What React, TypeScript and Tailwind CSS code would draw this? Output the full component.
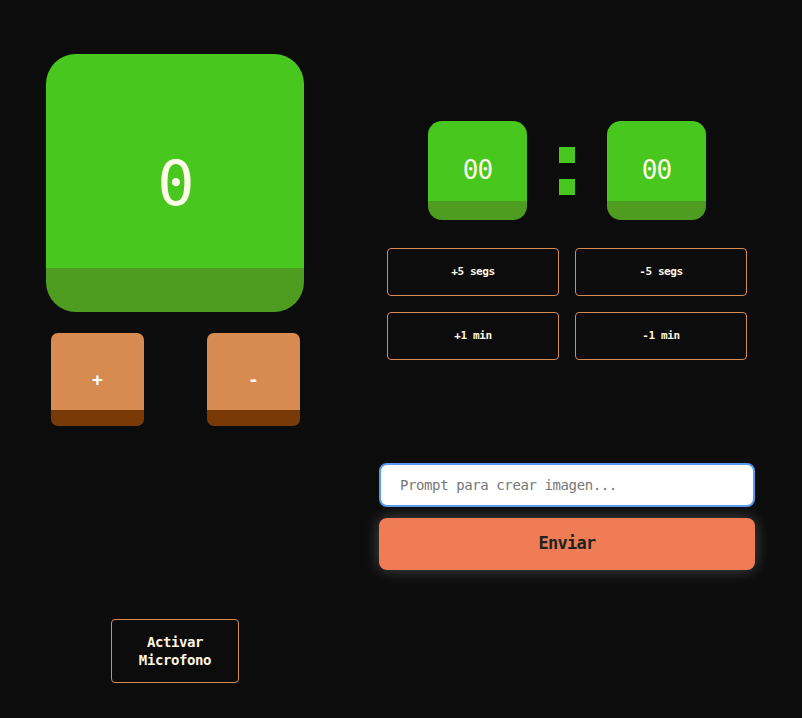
import { useState } from 'react';

const mono = { fontFamily: '"DejaVu Sans Mono", "Liberation Mono", monospace' };

export default function App() {
  const [count, setCount] = useState(0);
  const [secs, setSecs] = useState(0);
  const [prompt, setPrompt] = useState('');

  const mm = String(Math.floor(secs / 60)).padStart(2, '0');
  const ss = String(secs % 60).padStart(2, '0');
  const addSecs = (n: number) => setSecs((s) => Math.max(0, s + n));

  return (
    <div className="w-[802px] h-[718px] bg-[#0c0c0c] text-white overflow-hidden" style={mono}>
      <div className="flex">
        {/* columna izquierda */}
        <div className="w-[350px] pl-[46px] pt-[54px] flex flex-col">
          <div className="w-[258px] h-[258px] rounded-[30px] flex items-center justify-center bg-[linear-gradient(to_bottom,#48c71e_214px,#4e9c20_214px)] text-[62px] tracking-[-2px] text-[#fffbe8]">
            {count}
          </div>
          <div className="flex justify-between w-[249px] ml-[5px] mt-[21px]">
            <button
              onClick={() => setCount((c) => c + 1)}
              className="w-[93px] h-[93px] rounded-[7px] flex items-center justify-center bg-[linear-gradient(to_bottom,#d78b50_77px,#7a3a08_77px)] text-[18px] font-bold text-white"
            >
              +
            </button>
            <button
              onClick={() => setCount((c) => c - 1)}
              className="w-[93px] h-[93px] rounded-[7px] flex items-center justify-center bg-[linear-gradient(to_bottom,#d78b50_77px,#7a3a08_77px)] text-[18px] font-bold text-white"
            >
              -
            </button>
          </div>
          <button className="mt-[193px] ml-[65px] w-[128px] h-[64px] rounded-[4px] border border-[#d78b50] text-[14px] font-bold leading-[18px] tracking-[-0.4px] text-[#fff6e0]">
            Activar
            <br />
            Microfono
          </button>
        </div>

        {/* columna derecha */}
        <div className="flex flex-col pt-[121px] pl-[29px]">
          <div className="flex items-center ml-[49px]">
            <div className="w-[99px] h-[99px] rounded-[14px] flex items-center justify-center bg-[linear-gradient(to_bottom,#48c71e_80px,#4e9c20_80px)] text-[26px] tracking-[-1px] text-[#fffbe8]">
              {mm}
            </div>
            <div className="w-[80px] flex flex-col items-center gap-[16px]">
              <div className="w-[16px] h-[16px] bg-[#48c71e]" />
              <div className="w-[16px] h-[16px] bg-[#48c71e]" />
            </div>
            <div className="w-[99px] h-[99px] rounded-[14px] flex items-center justify-center bg-[linear-gradient(to_bottom,#48c71e_80px,#4e9c20_80px)] text-[26px] tracking-[-1px] text-[#fffbe8]">
              {ss}
            </div>
          </div>

          <div className="grid grid-cols-[172px_172px] gap-[16px] mt-[28px] ml-[8px]">
            {[
              ['+5 segs', 5],
              ['-5 segs', -5],
              ['+1 min', 60],
              ['-1 min', -60],
            ].map(([label, n]) => (
              <button
                key={label as string}
                onClick={() => addSecs(n as number)}
                className="h-[48px] rounded-[4px] border border-[#d78b50] text-[11px] font-bold tracking-[-0.4px] text-[#fff6e0]"
              >
                {label}
              </button>
            ))}
          </div>

          <div className="mt-[103px] w-[376px] flex flex-col gap-[11px]">
            <input
              value={prompt}
              onChange={(e) => setPrompt(e.target.value)}
              placeholder="Prompt para crear imagen..."
              className="h-[44px] rounded-[8px] border-2 border-[#5b9cf0] bg-white px-[19px] text-[14px] tracking-[-0.4px] text-[#222] placeholder:text-[#777] outline-none"
            />
            <button className="h-[52px] rounded-[8px] bg-[#ef7c55] text-[17px] font-bold tracking-[-0.7px] text-[#1c2420] shadow-[0_0_16px_rgba(255,255,255,0.25)]">
              Enviar
            </button>
          </div>
        </div>
      </div>
    </div>
  );
}
